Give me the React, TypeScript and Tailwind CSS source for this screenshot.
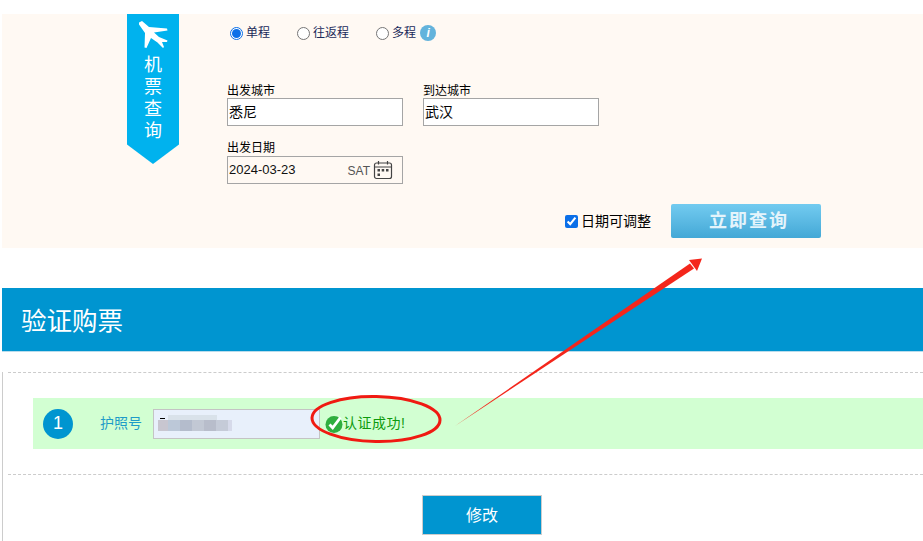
const FONT = { fontFamily: '"Liberation Sans", "Noto Sans CJK SC", sans-serif' };

function Radio({ checked, label }: { checked?: boolean; label: string }) {
  return (
    <label className="flex items-center gap-[3px] text-[12px] leading-[16px] text-[#1a2a5a]">
      <span
        className={`flex h-[13px] w-[13px] items-center justify-center rounded-full border bg-white ${
          checked ? "border-[#0b6fe8]" : "border-[#767676]"
        }`}
      >
        {checked && <span className="h-[9px] w-[9px] rounded-full bg-[#0b6fe8]" />}
      </span>
      {label}
    </label>
  );
}

function CityField({ label, value }: { label: string; value: string }) {
  return (
    <div className="w-[176px]">
      <div className="text-[12px] leading-[14px] text-black">{label}</div>
      <div className="h-[28px] border border-[#a5a5a5] bg-white pl-[1px] text-[14px] leading-[26px] text-black">
        {value}
      </div>
    </div>
  );
}

function PlaneIcon() {
  return (
    <svg width="29" height="27" viewBox="0 0 29 27" fill="white">
      <path d="M0 1.5L3 0L10 6L28 7.5L28.5 9.5L15 11.5L20 16L28.5 19.5L28 21L23 21L25 26L24 27L18.5 21.5L12 17L7.5 27L5.5 26.5L6 12L0 3.5Z" />
    </svg>
  );
}

function CalendarIcon() {
  return (
    <svg width="20" height="20" viewBox="0 0 20 20" fill="none" stroke="#444" strokeWidth="1.2">
      <rect x="1.5" y="3" width="17" height="15.5" rx="2" />
      <path d="M1.5 7h17M5.5 1v3.5M14.5 1v3.5" />
      <g fill="#444" stroke="none">
        <rect x="4.5" y="9" width="2.5" height="2.5" />
        <rect x="8.7" y="9" width="2.5" height="2.5" />
        <rect x="13" y="9" width="2.5" height="2.5" />
        <rect x="4.5" y="13.5" width="2.5" height="2.5" />
      </g>
    </svg>
  );
}

function SearchPanel() {
  return (
    <div className="ml-[2px] mt-[14px] flex h-[234px] bg-[#fff9f3]">
      <div className="ml-[125px] flex h-[150px] w-[52px] flex-col items-center bg-[#00b2ee] pt-[7px] text-[18px] leading-[22px] text-white [clip-path:polygon(0_0,100%_0,100%_87%,50%_100%,0_87%)]">
        <div className="mb-[6px] ml-[1px]">
          <PlaneIcon />
        </div>
        <span>机</span>
        <span>票</span>
        <span>查</span>
        <span>询</span>
      </div>
      <div className="ml-[48px] flex-1">
        <div className="ml-[3px] mt-[11px] flex items-center">
          <Radio checked label="单程" />
          <div className="ml-[27px]">
            <Radio label="往返程" />
          </div>
          <div className="ml-[27px]">
            <Radio label="多程" />
          </div>
          <span className="ml-[4px] flex h-[16px] w-[16px] items-center justify-center rounded-full bg-[#63b3dc] text-[12px] font-bold italic leading-none text-white">
            i
          </span>
        </div>
        <div className="mt-[43px] flex gap-[20px]">
          <CityField label="出发城市" value="悉尼" />
          <CityField label="到达城市" value="武汉" />
        </div>
        <div className="mt-[15px] w-[176px]">
          <div className="text-[12px] leading-[15px] text-black">出发日期</div>
          <div className="flex h-[28px] items-center border border-[#a5a5a5] pl-[1px] pr-[9px] text-[13px] leading-[24px] text-[#111]">
            <span>2024-03-23</span>
            <span className="ml-auto mr-[3px] mt-[2px] text-[12px] text-[#555]">SAT</span>
            <CalendarIcon />
          </div>
        </div>
        <div className="mr-[102px] mt-[20px] flex items-center justify-end">
          <input type="checkbox" defaultChecked className="h-[13px] w-[13px] accent-[#0b6fe8]" />
          <span className="ml-[3px] text-[14px] text-black">日期可调整</span>
          <button
            type="button"
            className="ml-[20px] h-[34px] w-[150px] rounded-[2px] bg-gradient-to-b from-[#72cbf0] to-[#43a8d6] pl-[6px] text-[18px] font-bold tracking-[2px] text-[#e4f4fb]"
          >
            立即查询
          </button>
        </div>
      </div>
    </div>
  );
}

function VerifySection() {
  return (
    <div className="ml-[2px] mt-[40px]">
      <div className="flex h-[64px] items-center border-b border-[#b9dcec] bg-[#0095d0] pl-[19px] pt-[3px] text-[25.5px] text-white">
        验证购票
      </div>
      <div className="h-[190px] border-l border-[#cccccc] pl-[5px]">
        <div className="mt-[20px] h-0 border-t border-dashed border-[#cccccc]" />
        <div className="ml-[25px] mt-[25px] flex h-[51px] items-center bg-[#d2ffd2] pl-[10px]">
          <span className="flex h-[30px] w-[30px] items-center justify-center rounded-full bg-[#0095d0] text-[18px] text-white">
            1
          </span>
          <span className="ml-[27px] text-[14px] text-[#1d9bc8]">护照号</span>
          <div className="relative ml-[11px] h-[30px] w-[167px] overflow-hidden border border-[#c4c4c4] bg-[#e8f0fb]">
            <div className="absolute left-[14px] top-[5px] h-[5px] w-[49px] bg-[#d9e2ea]" />
            <div className="absolute left-[6px] top-[8px] h-[1px] w-[5px] bg-black" />
            <div className="absolute left-[4px] top-[10px] flex">
              <span className="h-[11px] w-[10px] bg-[#c8c6d0]" />
              <span className="h-[11px] w-[12px] bg-[#bcc8d8]" />
              <span className="h-[11px] w-[12px] bg-[#b4bccc]" />
              <span className="h-[11px] w-[12px] bg-[#c2c8d4]" />
              <span className="h-[11px] w-[12px] bg-[#b8bdcb]" />
              <span className="h-[11px] w-[12px] bg-[#c5cbd8]" />
              <span className="h-[11px] w-[4px] bg-[#d6daea]" />
            </div>
          </div>
          <svg className="ml-[5px]" width="18" height="18" viewBox="0 0 18 18">
            <circle cx="9" cy="9.5" r="8.5" fill="#2fae3f" />
            <path d="M4.5 9.5l3.2 3.3L15.5 2.5" fill="none" stroke="white" strokeWidth="2.8" />
          </svg>
          <span className="text-[14px] tracking-[0.5px] text-[#0d9a0d]">认证成功!</span>
        </div>
        <div className="mt-[25px] h-0 border-t border-dashed border-[#cccccc]" />
        <div className="ml-[414px] mt-[20px]">
          <button
            type="button"
            className="h-[40px] w-[120px] border border-[#cccccc] bg-[#0095d0] pt-[2px] text-[16px] text-white"
          >
            修改
          </button>
        </div>
      </div>
    </div>
  );
}

export default function App() {
  return (
    <div style={FONT} className="relative h-[541px] w-[923px] overflow-hidden bg-white pt-px">
      <div className="-mt-px">
        <SearchPanel />
        <VerifySection />
      </div>
      {/* red annotation marks drawn over the page */}
      <svg className="pointer-events-none absolute left-0 top-0" width="923" height="541" fill="none">
        <ellipse cx="376" cy="419" rx="64" ry="22.5" stroke="#f01a12" strokeWidth="3" transform="rotate(1 376 419)" />
        <path d="M455 426L690 263.5L694 268.5Z" fill="#f4261b" />
        <path d="M702 258.5L689 260L697 271Z" fill="#f4261b" />
      </svg>
    </div>
  );
}
